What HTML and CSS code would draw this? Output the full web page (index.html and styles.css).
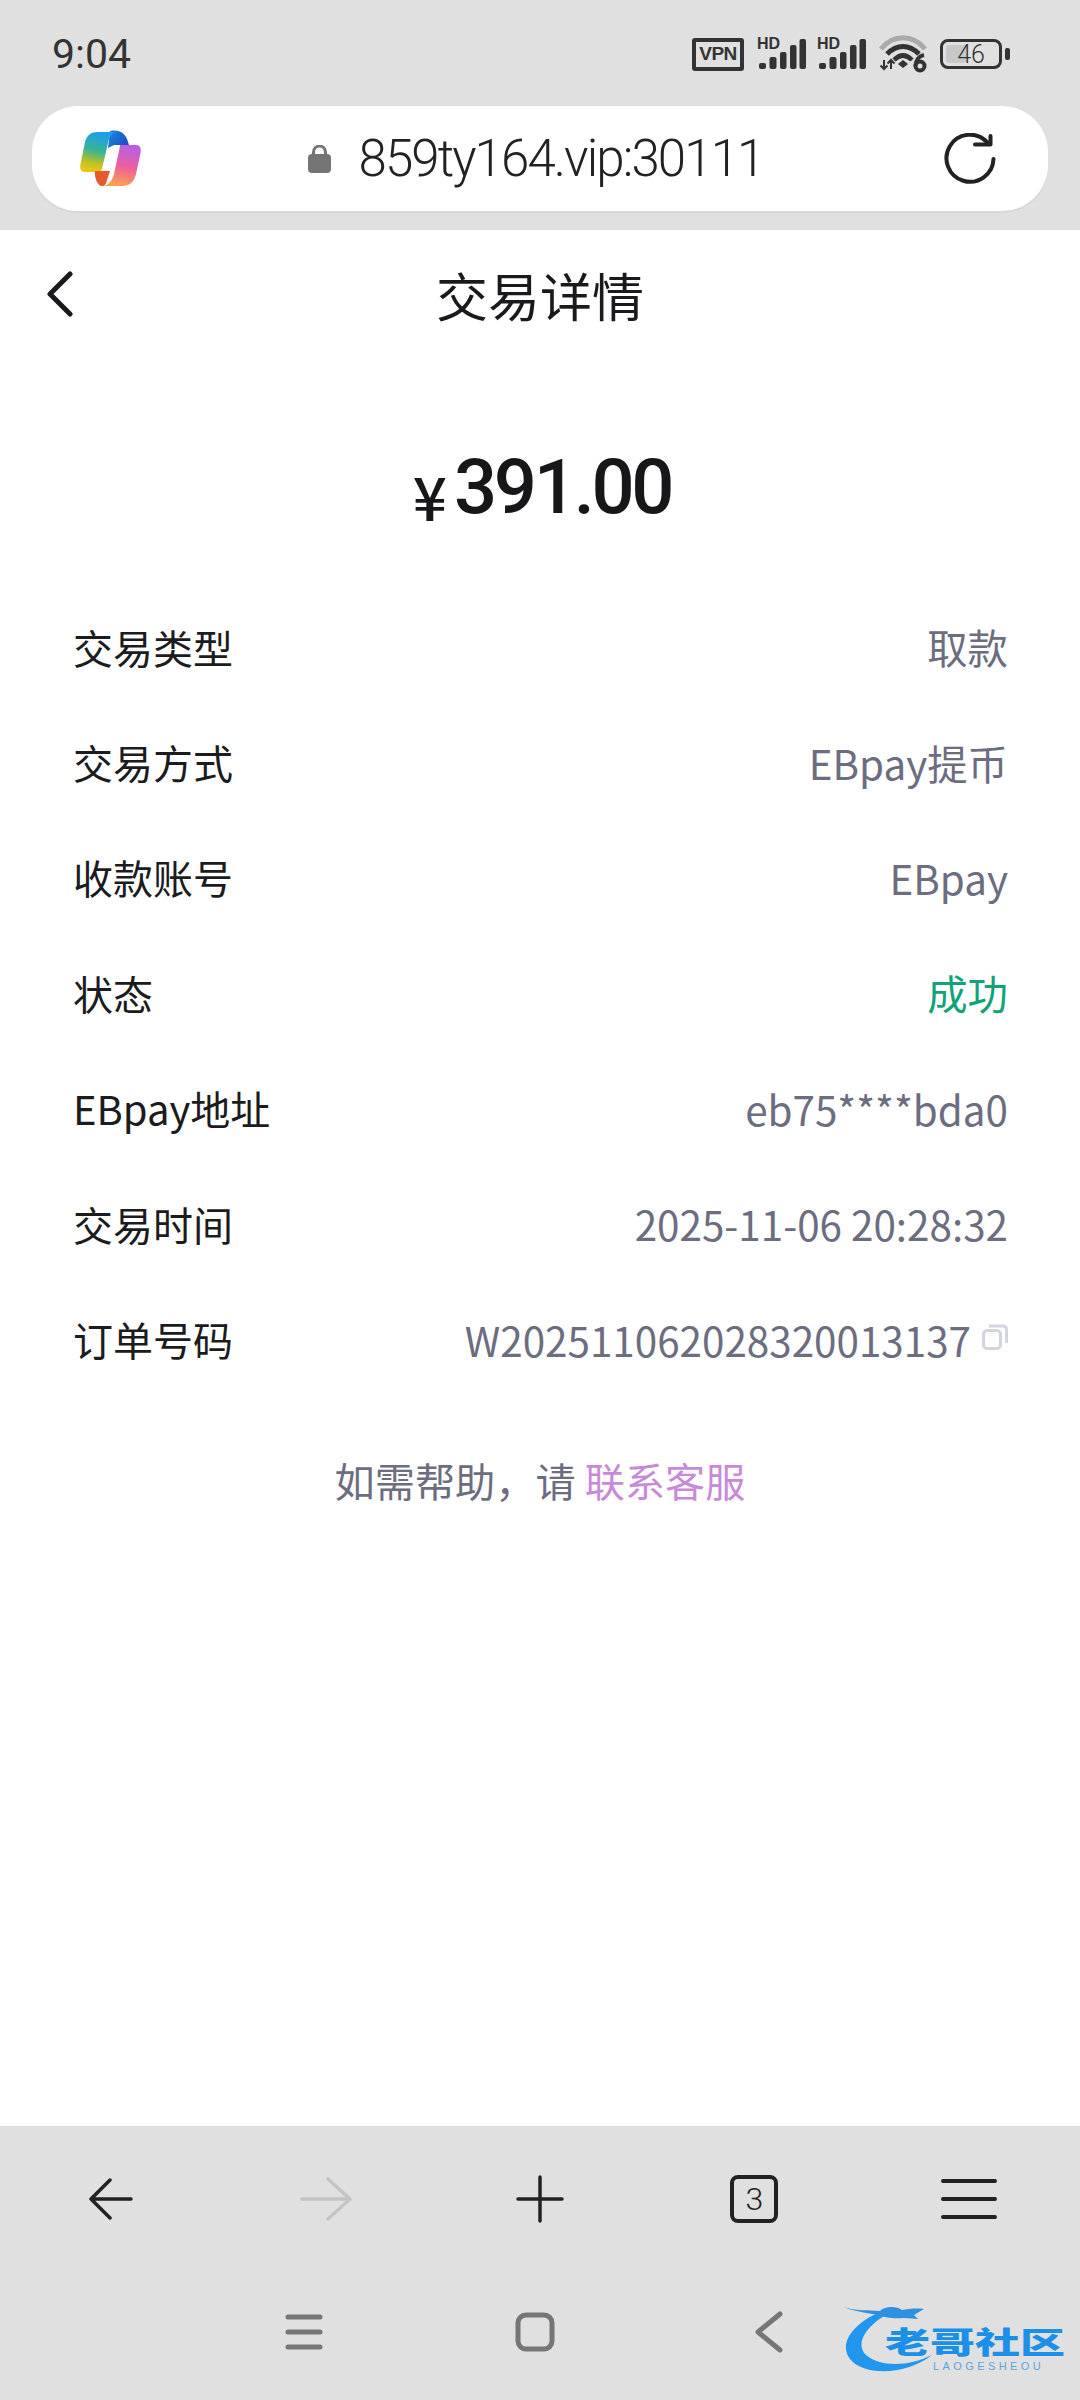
FILE: index.html
```html
<!DOCTYPE html>
<html lang="zh">
<head>
  <meta charset="UTF-8" />
  <title>交易详情</title>
  <link rel="stylesheet" href="styles.css">
</head>
<body>
  <header class="chrome">
    <div class="status">
      <span class="clock">9:04</span>
      <div class="status-icons">
        <span class="vpn">VPN</span>
        <div class="signal">
          <span class="hd">HD</span>
          <svg width="49" height="32" viewBox="0 0 49 32" fill="#333">
            <rect x="2" y="25" width="7" height="6" rx="2"/>
            <rect x="12.5" y="19" width="7" height="12" rx="2"/>
            <rect x="23" y="14" width="6.5" height="17" rx="2"/>
            <rect x="33" y="7" width="6.5" height="24" rx="2"/>
            <rect x="42.5" y="1" width="6.5" height="30" rx="2"/>
          </svg>
        </div>
        <div class="signal">
          <span class="hd">HD</span>
          <svg width="49" height="32" viewBox="0 0 49 32" fill="#333">
            <rect x="2" y="25" width="7" height="6" rx="2"/>
            <rect x="12.5" y="19" width="7" height="12" rx="2"/>
            <rect x="23" y="14" width="6.5" height="17" rx="2"/>
            <rect x="33" y="7" width="6.5" height="24" rx="2"/>
            <rect x="42.5" y="1" width="6.5" height="30" rx="2"/>
          </svg>
        </div>
        <svg class="wifi" width="50" height="38" viewBox="0 0 50 38" fill="none">
          <path d="M2 14C14 -1 34 -1 46 14" stroke="#aaa" stroke-width="5"/>
          <path d="M8 19C18 9 30 9 40 19" stroke="#333" stroke-width="5"/>
          <path d="M15 25C21 19 27 19 33 25" stroke="#333" stroke-width="4.5"/>
          <path d="M19 29L24 25L29 29L24 33Z" fill="#333"/>
          <path d="M5 25V34M1.5 30.5L5 34L8.5 30.5M12 34V25M8.5 28.5L12 25L15.5 28.5" stroke="#333" stroke-width="2"/>
          <circle cx="41" cy="31" r="4.5" stroke="#333" stroke-width="4"/>
          <path d="M36.5 31C36.5 25 40 21 45 20" stroke="#333" stroke-width="4"/>
        </svg>
        <div class="battery">
          <div class="battery-body"><span class="battery-fill"></span><span class="battery-num">46</span></div>
          <span class="battery-nub"></span>
        </div>
      </div>
    </div>
    <div class="urlbar">
      <svg class="copilot" width="62" height="58" viewBox="0 0 62 58">
        <defs>
          <linearGradient id="cpA" x1="0.5" y1="0" x2="0.3" y2="1">
            <stop offset="0" stop-color="#1f9cf0"/>
            <stop offset="0.45" stop-color="#35b496"/>
            <stop offset="0.8" stop-color="#c8c31c"/>
            <stop offset="1" stop-color="#f0c518"/>
          </linearGradient>
          <linearGradient id="cpB" x1="0.6" y1="0" x2="0.4" y2="1">
            <stop offset="0" stop-color="#b85fe6"/>
            <stop offset="0.5" stop-color="#ea5fa0"/>
            <stop offset="1" stop-color="#ffa24c"/>
          </linearGradient>
          <linearGradient id="cpC" x1="0" y1="0" x2="1" y2="0.6">
            <stop offset="0" stop-color="#1d8ce0"/>
            <stop offset="1" stop-color="#1a4fc0"/>
          </linearGradient>
        </defs>
        <path d="M30 1C38 -0.5 44 2 47 9L49 15H34L28 18Z" fill="url(#cpC)"/>
        <path d="M18 2H36C31 2 29 8 28 13L22 39C21.5 41 19 42 15 42H6C1 42 -0.5 39 0.5 34L5 12C7 5 11 2 18 2Z" fill="url(#cpA)"/>
        <path d="M15 41H30L27 50C26 54 25 56 22 56C18 56 14 48 15 41Z" fill="#e65a2a"/>
        <path d="M40 15H56C60 15 61.5 18 60.5 23L56 44C54 52 50 56 42 56H22C29 56 32 50 34 44L39 21C39.5 18 40 16 40 15Z" fill="url(#cpB)"/>
      </svg>
      <div class="address">
        <svg width="23" height="28" viewBox="0 0 23 28">
          <path d="M5.5 11V7a6 6 0 0 1 12 0v4" fill="none" stroke="#757575" stroke-width="3"/>
          <rect x="0" y="9" width="23" height="19" rx="4" fill="#757575"/>
        </svg>
        <span class="url">859ty164.vip:30111</span>
      </div>
      <svg class="refresh" width="52" height="52" viewBox="0 0 52 52" fill="none" stroke="#222" stroke-width="4" stroke-linecap="round" stroke-linejoin="round">
        <path d="M43 9A23.5 23.5 0 1 0 49.5 26"/>
        <path d="M31 11.5H46.5V3"/>
      </svg>
    </div>
  </header>

  <main class="page">
    <div class="topbar">
      <svg class="back" width="30" height="46" viewBox="0 0 30 46" fill="none" stroke="#1a1a1e" stroke-width="5" stroke-linecap="round" stroke-linejoin="round">
        <path d="M25 3L5 23L25 43"/>
      </svg>
      <h1 class="title">交易详情</h1>
    </div>

    <div class="amount"><span class="yen">¥</span><span class="sum">391.00</span></div>

    <ul class="details">
      <li class="row"><span class="key">交易类型</span><span class="val">取款</span></li>
      <li class="row"><span class="key">交易方式</span><span class="val">EBpay提币</span></li>
      <li class="row"><span class="key">收款账号</span><span class="val">EBpay</span></li>
      <li class="row"><span class="key">状态</span><span class="val ok">成功</span></li>
      <li class="row"><span class="key">EBpay地址</span><span class="val">eb75****bda0</span></li>
      <li class="row"><span class="key">交易时间</span><span class="val">2025-11-06 20:28:32</span></li>
      <li class="row">
        <span class="key">订单号码</span>
        <span class="val">W202511062028320013137
          <svg class="copy" width="26" height="26" viewBox="0 0 26 26" fill="none" stroke="#d4d4de" stroke-width="3">
            <rect x="1.5" y="6.5" width="17" height="18" rx="4"/>
            <path d="M7 2H21C23 2 24.5 3.5 24.5 6V19"/>
          </svg>
        </span>
      </li>
    </ul>

    <p class="help">如需帮助，请 <a class="link">联系客服</a></p>
  </main>

  <nav class="toolbar">
    <div class="tool">
      <svg width="44" height="42" viewBox="0 0 44 42" fill="none" stroke="#222" stroke-width="3.5" stroke-linecap="round" stroke-linejoin="round"><path d="M42 21H2M21 2L2 21L21 40"/></svg>
    </div>
    <div class="tool">
      <svg width="52" height="44" viewBox="0 0 52 44" fill="none" stroke="#c4c4c4" stroke-width="3.5" stroke-linecap="round" stroke-linejoin="round"><path d="M2 22H50M28 2L50 22L28 42"/></svg>
    </div>
    <div class="tool">
      <svg width="48" height="48" viewBox="0 0 48 48" fill="none" stroke="#222" stroke-width="3.5" stroke-linecap="round"><path d="M2 24H46M24 2V46"/></svg>
    </div>
    <div class="tool"><span class="tabs">3</span></div>
    <div class="tool">
      <svg width="56" height="40" viewBox="0 0 56 40" fill="none" stroke="#222" stroke-width="4" stroke-linecap="round"><path d="M2 2H54M2 20H54M2 38H54"/></svg>
    </div>
  </nav>

  <nav class="sysnav">
    <svg width="38" height="36" viewBox="0 0 38 36" fill="none" stroke="#767676" stroke-width="5" stroke-linecap="round"><path d="M3 3H35M3 18H35M3 33H35"/></svg>
    <svg class="sys-home" width="40" height="40" viewBox="0 0 40 40" fill="none" stroke="#767676" stroke-width="5"><rect x="3" y="3" width="34" height="34" rx="8"/></svg>
    <svg width="28" height="42" viewBox="0 0 28 42" fill="none" stroke="#767676" stroke-width="5" stroke-linecap="round" stroke-linejoin="round"><path d="M25 3L3 21L25 39"/></svg>
    <div class="mark">
      <svg class="mark-swoosh" width="110" height="70" viewBox="0 0 110 70">
        <path d="M38 7C12 18 -4 38 8 54C20 70 62 72 90 50C66 62 38 62 24 50C12 38 26 20 44 10Z" fill="#2196ee"/>
        <path d="M2 2C12 6 28 5 38 6C44 0 56 2 60 5C66 4 74 3 82 4L72 10L76 14L62 13C50 14 42 12 36 10C26 8 10 6 2 2Z" fill="#2f90e0"/>
      </svg>
      <span class="mark-name">老哥社区</span>
      <span class="mark-sub">LAOGESHEOU</span>
    </div>
  </nav>
</body>
</html>
```

FILE: styles.css
```css
* {
  box-sizing: border-box;
}

html, body {
  margin: 0;
  padding: 0;
}

body {
  width: 1080px;
  height: 2400px;
  display: flex;
  flex-direction: column;
  background: #fff;
  font-family: "Noto Sans CJK SC", "Noto Sans", sans-serif;
  overflow: hidden;
}

/* browser chrome */
.chrome {
  height: 230px;
  background: #e0e0e0;
  flex-shrink: 0;
}

.status {
  height: 106px;
  display: flex;
  align-items: center;
  justify-content: space-between;
  padding: 2px 70px 0 52px;
}

.clock {
  font-family: Roboto, sans-serif;
  font-size: 41px;
  color: #333;
}

.status-icons {
  display: flex;
  align-items: center;
  gap: 11px;
}

.vpn {
  width: 52px;
  height: 33px;
  margin-right: 2px;
  border: 4px solid #333;
  border-radius: 3px;
  display: flex;
  align-items: center;
  justify-content: center;
  font: bold 19px "Liberation Sans", sans-serif;
  letter-spacing: -0.5px;
  color: #333;
}

.signal {
  position: relative;
  width: 49px;
  height: 32px;
}

.signal svg {
  display: block;
}

.hd {
  position: absolute;
  left: 0;
  top: 0;
  font: bold 16px/12px "Liberation Sans", sans-serif;
  color: #333;
}

.wifi {
  margin-left: 2px;
}

.battery {
  display: flex;
  align-items: center;
  gap: 3px;
}

.battery-body {
  position: relative;
  width: 62px;
  height: 30px;
  border: 3px solid #333;
  border-radius: 8px;
  display: flex;
  align-items: center;
  justify-content: center;
}

.battery-fill {
  position: absolute;
  left: 3px;
  top: 3px;
  bottom: 3px;
  width: 20px;
  background: #c8c8c8;
  border-radius: 3px;
}

.battery-num {
  position: relative;
  font-family: Roboto, sans-serif;
  font-size: 25px;
  font-weight: 300;
  line-height: 1;
  color: #333;
}

.battery-nub {
  width: 5px;
  height: 12px;
  background: #333;
  border-radius: 2px;
}

.urlbar {
  height: 105px;
  margin: 0 32px;
  padding: 0 52px 0 48px;
  background: #fff;
  border-radius: 46px;
  display: flex;
  align-items: center;
  justify-content: space-between;
  box-shadow: 0 2px 0 #d8d8d8;
}

.address {
  display: flex;
  align-items: center;
  gap: 28px;
  margin-right: 15px;
}

.url {
  font-family: Roboto, sans-serif;
  font-size: 51px;
  font-weight: 350;
  letter-spacing: -1.9px;
  color: #222;
  line-height: 1;
}

/* page */
.page {
  flex: 1;
}

.topbar {
  height: 128px;
  position: relative;
  display: flex;
  align-items: center;
  justify-content: center;
}

.back {
  position: absolute;
  left: 45px;
  top: 41px;
}

.title {
  margin: 0;
  font-size: 52px;
  font-weight: 400;
  color: #1a1a1e;
}

.amount {
  height: 130px;
  margin-top: 58px;
  padding: 12px 0 0 4px;
  display: flex;
  align-items: center;
  justify-content: center;
  color: #17171a;
}

.yen {
  font-size: 60px;
  font-weight: 500;
  margin-right: 7px;
  margin-top: 14px;
}

.sum {
  font-family: Roboto, sans-serif;
  font-size: 76px;
  font-weight: 500;
  letter-spacing: -3.3px;
}

.details {
  list-style: none;
  margin: 0;
  padding: 43px 72px 0 73px;
}

.row {
  height: 115.4px;
  display: flex;
  align-items: center;
  justify-content: space-between;
  font-size: 40px;
}

.key {
  color: #1b1b20;
}

.val {
  color: #6d6d80;
  font-size: 40.4px;
  display: flex;
  align-items: center;
  gap: 11px;
}

.val.ok {
  color: #12a376;
}

.copy {
  margin-top: -4px;
}

.help {
  margin: 53px 0 0;
  text-align: center;
  font-size: 40.2px;
  color: #6d6d80;
}

.link {
  color: #c88ad8;
}

/* bottom bars */
.toolbar {
  height: 152px;
  flex-shrink: 0;
  padding: 0 4px;
  display: grid;
  grid-template-columns: repeat(5, 1fr);
  background: #e0e0e0;
}

.tool {
  display: flex;
  align-items: center;
  justify-content: center;
  padding-bottom: 6px;
}

.tabs {
  width: 48px;
  height: 48px;
  border: 4px solid #222;
  border-radius: 8px;
  display: flex;
  align-items: center;
  justify-content: center;
  font-family: Roboto, sans-serif;
  font-size: 32px;
  font-weight: 300;
  color: #222;
}

.sysnav {
  position: relative;
  height: 122px;
  flex-shrink: 0;
  background: #e0e0e0;
  padding: 0 297px 14px 285px;
  display: flex;
  align-items: center;
  justify-content: space-between;
}

.sys-home {
  margin-right: 8px;
}

/* watermark stamped over the corner */
.mark {
  position: absolute;
  left: 842px;
  top: 27px;
  width: 224px;
  height: 70px;
}

.mark-swoosh {
  position: absolute;
  left: 0;
  top: 0;
}

.mark-name {
  position: absolute;
  left: 43px;
  top: 20px;
  font-size: 45px;
  font-weight: 900;
  line-height: 1;
  color: #1c8fe8;
  white-space: nowrap;
  transform: scaleY(0.66);
  transform-origin: top left;
}

.mark-sub {
  position: absolute;
  left: 91px;
  top: 55px;
  font: 11px/12px "Liberation Sans", sans-serif;
  letter-spacing: 3.4px;
  color: #5aa6e0;
}
```
